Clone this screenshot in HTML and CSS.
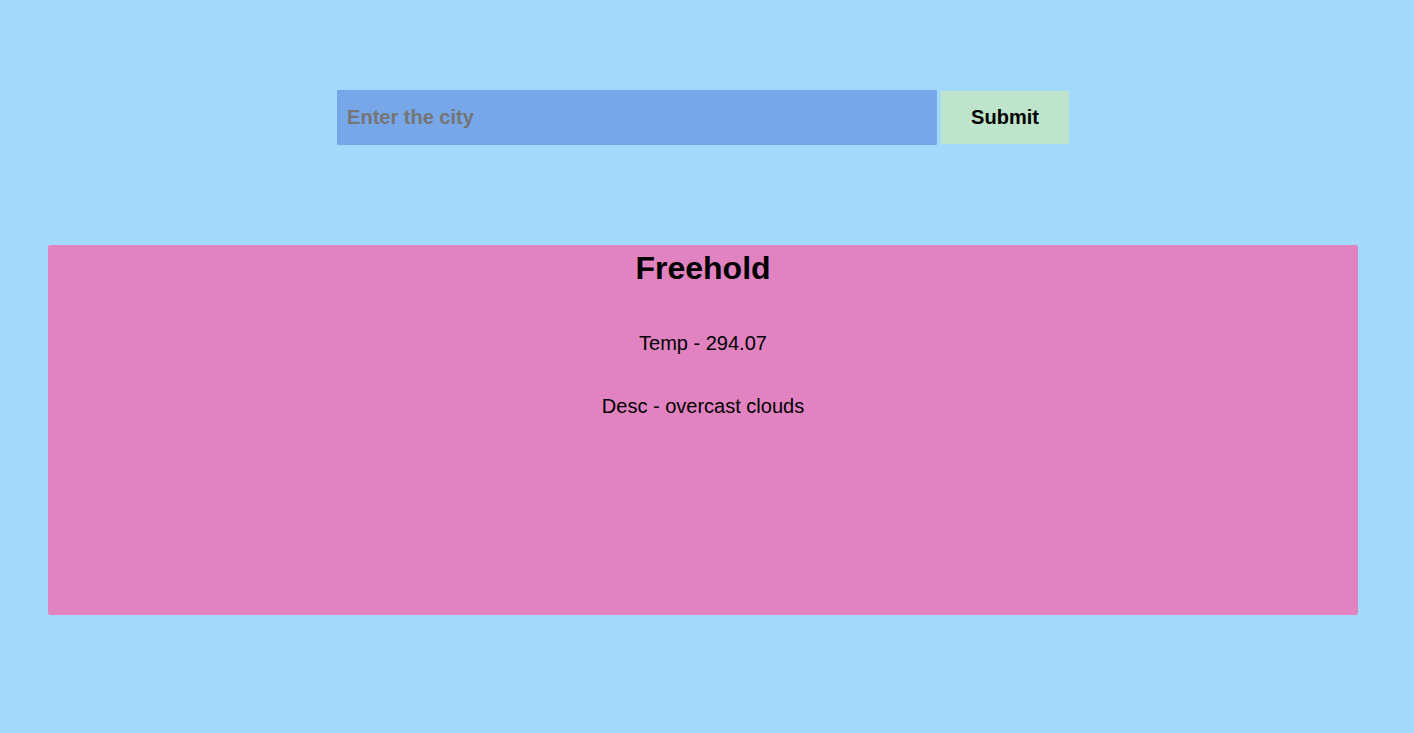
FILE: index.html
```html
<!DOCTYPE html>
<html lang="en">
<head>
<meta charset="utf-8">
<title>Weather</title>
<link rel="stylesheet" href="styles.css">
</head>
<body>
<main class="page">
  <form class="search">
    <input class="search-input" type="text" placeholder="Enter the city" aria-label="City">
    <button class="search-button" type="button">Submit</button>
  </form>
  <section class="card">
    <h1 class="city">Freehold</h1>
    <p class="detail">Temp - 294.07</p>
    <p class="detail">Desc - overcast clouds</p>
  </section>
</main>
</body>
</html>
```
FILE: styles.css
```css
* {
  box-sizing: border-box;
  margin: 0;
}

body {
  min-height: 100vh;
  background: #a3daf9;
  color: #000;
  font-family: "Liberation Sans", Arial, sans-serif;
  font-size: 20px;
}

.page {
  padding: 90px 56px 90px 48px;
}

.search {
  display: flex;
  justify-content: center;
  align-items: center;
  gap: 4px;
  margin-bottom: 100px;
}

.search-input {
  flex: 0 1 600px;
  min-width: 0;
  padding: 16px 10px;
  border: 0;
  border-radius: 1px;
  background: #77a6e9;
  font: bold 20px/23px "Liberation Sans", Arial, sans-serif;
}

.search-input::placeholder {
  color: #757575;
}

.search-button {
  padding: 15px 30px;
  border: 0;
  border-radius: 1px;
  background: #bee4cb;
  color: #000;
  font: bold 20px/23px "Liberation Sans", Arial, sans-serif;
}

.card {
  min-height: 370px;
  padding-top: 5px;
  border-radius: 2px;
  background: #e283c1;
  text-align: center;
}

.city {
  margin-bottom: 45px;
  font-size: 32px;
  line-height: 37px;
}

.detail {
  margin-bottom: 40px;
  line-height: 23px;
}
```
